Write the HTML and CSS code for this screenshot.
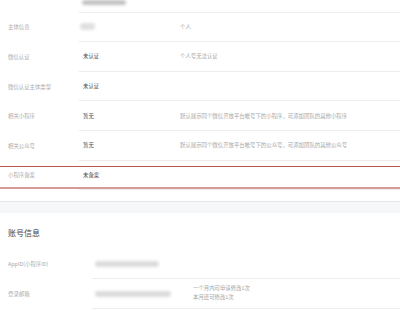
FILE: index.html
```html
<!DOCTYPE html>
<html lang="zh">
<head>
<meta charset="utf-8">
<link rel="stylesheet" href="styles.css">
</head>
<body>
<section class="panel">
  <div class="row row-cut">
    <div class="label"></div>
    <div class="cell cell-top"><div class="blob blob-top"></div></div>
  </div>
  <div class="row">
    <div class="label">主体信息</div>
    <div class="cell">
      <div class="value"><div class="blob blob-small"></div></div>
      <div class="desc">个人</div>
    </div>
  </div>
  <div class="row">
    <div class="label">微信认证</div>
    <div class="cell">
      <div class="value">未认证</div>
      <div class="desc">个人号无法认证</div>
    </div>
  </div>
  <div class="row">
    <div class="label">微信认证主体类型</div>
    <div class="cell">
      <div class="value">未认证</div>
      <div class="desc"></div>
    </div>
  </div>
  <div class="row">
    <div class="label">相关小程序</div>
    <div class="cell">
      <div class="value">暂无</div>
      <div class="desc">默认展示同个微信开放平台帐号下的小程序，可添加团队的其他小程序</div>
    </div>
  </div>
  <div class="row">
    <div class="label">相关公众号</div>
    <div class="cell">
      <div class="value">暂无</div>
      <div class="desc">默认展示同个微信开放平台帐号下的公众号，可添加团队的其他公众号</div>
    </div>
  </div>
  <div class="row row-marked">
    <div class="label">小程序备案</div>
    <div class="cell">
      <div class="value">未备案</div>
      <div class="desc"></div>
    </div>
    <div class="highlight"></div>
  </div>
</section>
<div class="band"></div>
<section class="panel account">
  <h2 class="title">账号信息</h2>
  <div class="row row-acc row-first">
    <div class="label">AppID(小程序ID)</div>
    <div class="cell">
      <div class="value"><div class="blob blob-appid"></div></div>
      <div class="desc"></div>
    </div>
  </div>
  <div class="row row-acc">
    <div class="label">登录邮箱</div>
    <div class="cell">
      <div class="value"><div class="blob blob-mail"></div></div>
      <div class="desc lines"><span>一个月内可申请修改1次</span><span>本月还可修改1次</span></div>
    </div>
  </div>
</section>
</body>
</html>
```
FILE: styles.css
```css
html, body {
  margin: 0;
  padding: 0;
  background: #fff;
  overflow: hidden;
}
body {
  font-family: "Noto Sans CJK SC", "Noto Sans", sans-serif;
  font-size: 5.4px;
  color: #4a4a4a;
  width: 400px;
  height: 310px;
}
.panel {
  background: #fff;
}
.row {
  display: flex;
  height: 29.6px;
  position: relative;
}
.row-cut {
  height: 12.6px;
}
.label {
  width: 79px;
  flex: none;
  padding-left: 8px;
  box-sizing: border-box;
  display: flex;
  align-items: center;
  color: #ababab;
}
.cell {
  flex: 1;
  display: flex;
  align-items: center;
  border-bottom: 1px solid #ededed;
}
.cell-top {
  align-items: flex-start;
}
.value {
  width: 101px;
  flex: none;
  padding-left: 4px;
  box-sizing: border-box;
  color: #4a4a4a;
}
.desc {
  flex: 1;
  color: #a6a6a6;
}
.blob {
  background: #cfcfcf;
  filter: blur(1.5px);
  border-radius: 3px;
}
.blob-top {
  width: 44px;
  height: 5px;
  margin-left: 3px;
  background: #c2c2c2;
}
.blob-small {
  width: 15px;
  height: 7px;
  margin-left: -3px;
  background: #e0e0e0;
}
.highlight {
  position: absolute;
  left: 0;
  right: 0;
  top: 5px;
  height: 20px;
  border-top: 1px solid #b9574e;
  border-bottom: 2px solid #d59a95;
}
.band {
  height: 11px;
  margin-top: 11px;
  background: #f6f7f9;
  border-top: 1px solid #e6e6e6;
}
.title {
  margin: 0;
  font-size: 8px;
  font-weight: normal;
  color: #444;
  padding: 14px 0 0 8px;
  height: 22px;
  line-height: 12px;
}
.row-acc {
  height: 30px;
}
.row-acc .label {
  width: 92px;
}
.row-acc .value {
  width: 101px;
  padding-left: 3px;
}
.blob-appid {
  width: 64px;
  height: 6px;
  background: #dcdcdc;
}
.blob-mail {
  width: 76px;
  height: 6px;
  background: #dcdcdc;
}
.lines {
  display: flex;
  flex-direction: column;
  line-height: 9px;
  margin-top: -2px;
}
```
